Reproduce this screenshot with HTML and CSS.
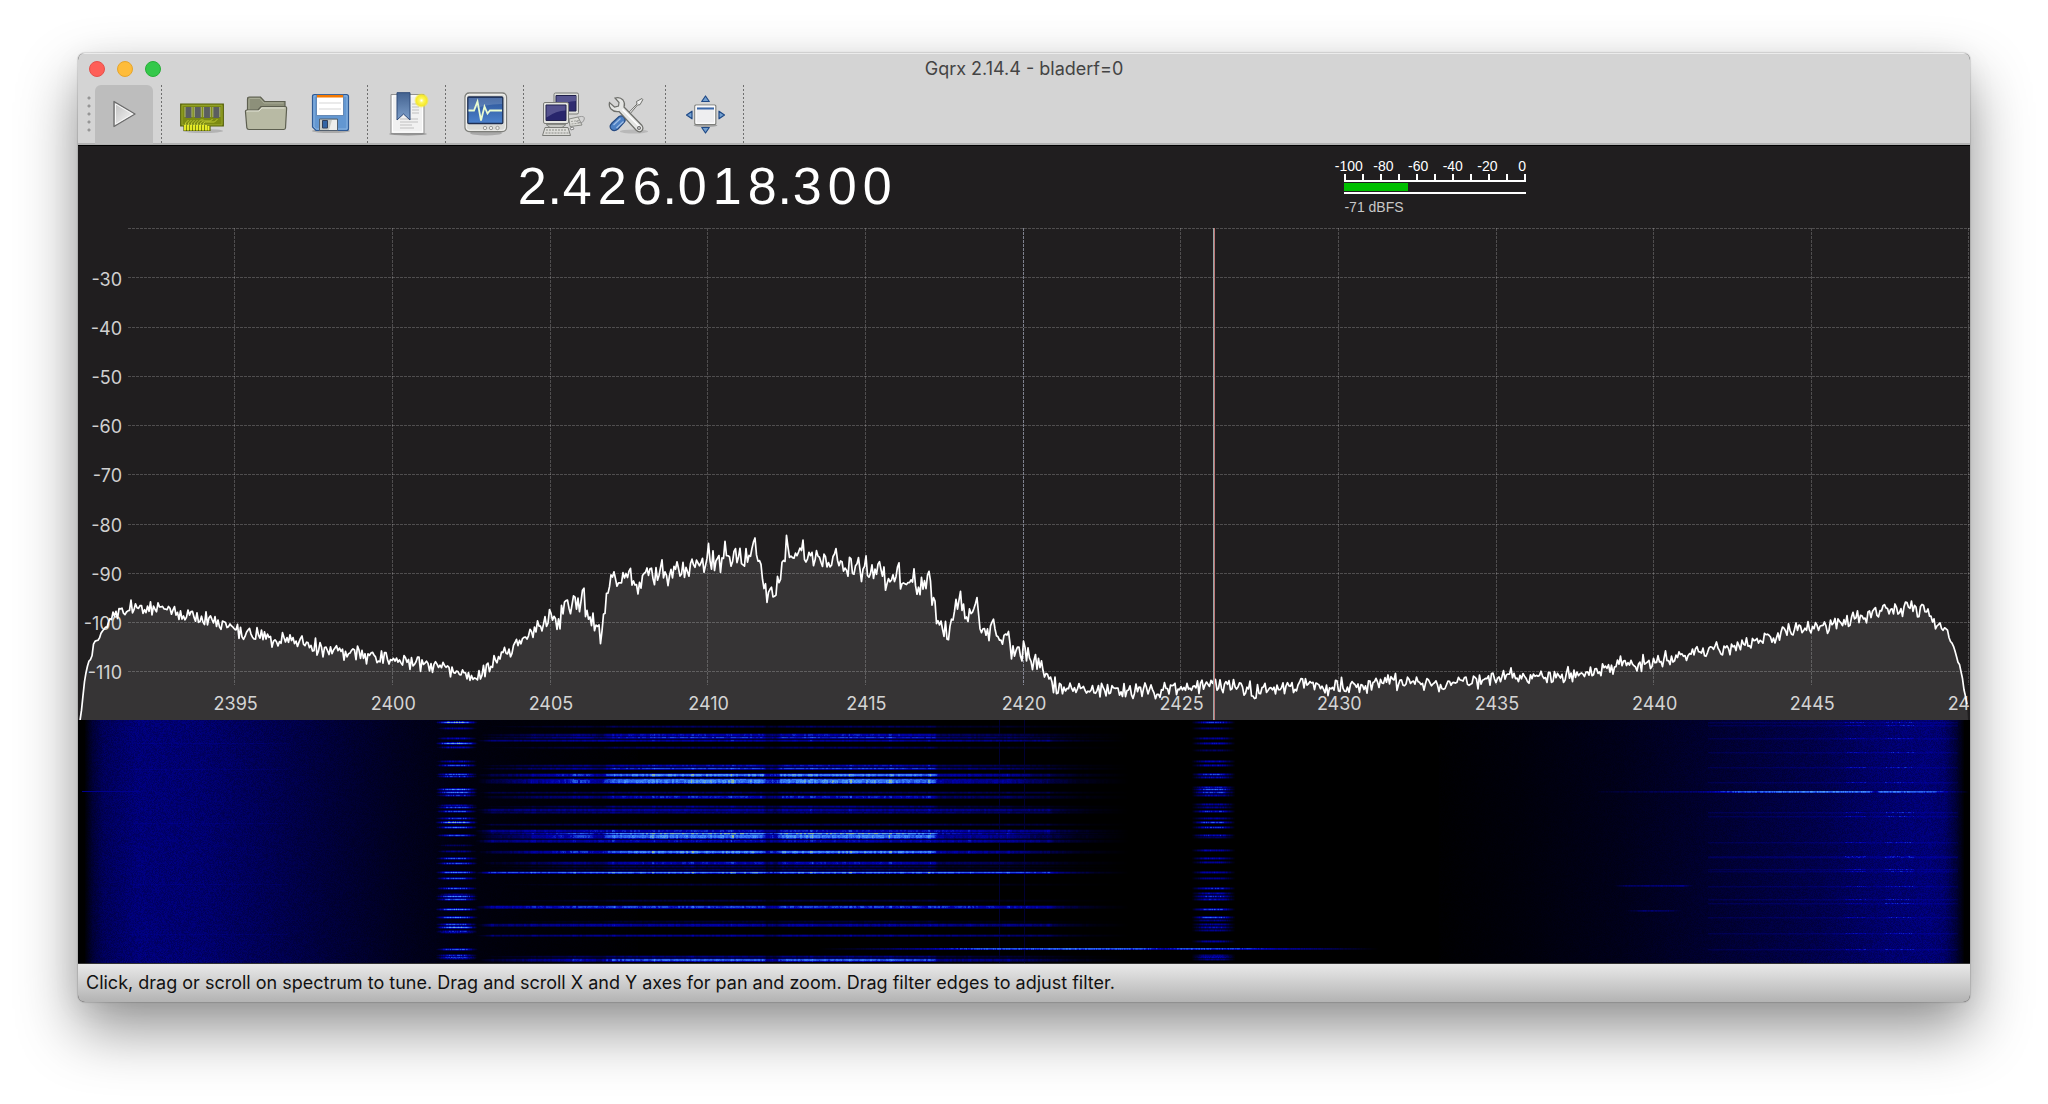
FILE: index.html
```html
<!DOCTYPE html>
<html lang="en">
<head>
<meta charset="utf-8">
<title>Gqrx 2.14.4 - bladerf=0</title>
<link rel="stylesheet" href="styles.css">
</head>
<body>
<main class="window">
  <header class="chrome">
    <div class="titlebar">
      <div class="lights">
        <button class="light light-close" aria-label="Close"></button>
        <button class="light light-min" aria-label="Minimize"></button>
        <button class="light light-zoom" aria-label="Zoom"></button>
      </div>
      <h1 class="title">Gqrx 2.14.4 - bladerf=0</h1>
    </div>
    <div class="toolbar" role="toolbar" aria-label="Main">
      <span class="handle"></span>
      <button class="tool tool-active" aria-label="Start DSP">
        <svg class="icon" viewBox="0 0 44 44"><defs><linearGradient id="g1" x2="1" y2="1"><stop stop-color="#bdbdbd"/><stop offset="1" stop-color="#fdfdfd"/></linearGradient></defs><path d="M12 9.500L33 22 12 34.500z" fill="url(#g1)" stroke="#6b6b6b" stroke-width="1.300" stroke-linejoin="round"/><path d="M13.500 12L30.500 22 13.500 32z" fill="none" stroke="#f6f6f6"/></svg>
      </button>
      <span class="sep"></span>
      <button class="tool" aria-label="Configure I/O devices">
        <svg class="icon" viewBox="0 0 44 44"><ellipse cx="23" cy="39" rx="20" ry="2" fill="#000" opacity=".16"/><path d="M.700 12h42.600v22H30v4.500H4V34H.700z" fill="#7c8a12" stroke="#55600a" stroke-width="1.200"/><path d="M2 13.300h40v19.500H2z" fill="none" stroke="#97a52c"/><g stroke="#bcc832" fill="none"><path d="M5.500 34v-3l3-3M8.500 34v-3l3-3M11.500 34v-3l3-3M14.500 34v-3l3-3M17.500 34v-3l3-3h3M20.500 34v-3l3-2h7l2-2M23.500 34v-3l2-1h9l3-3"/></g><path d="M5 33v5.500M8 33v5.500M11 33v5.500M14 33v5.500M17 33v5.500M20 33v5.500M23 33v5.500M26 33v5.500M28.500 34v4.500" stroke="#f0f32a" stroke-width="1.800"/><g fill="#5b5e60"><path d="M5.500 15h6v11h-6zM14.800 15h6v11h-6zM24 15h6v11h-6zM33.300 15h6v11h-6z"/></g><g stroke="#c9ccc0" stroke-width="1.200" stroke-dasharray="1 1"><path d="M5 15.500v10M12 15.500v10M14.300 15.500v10M21.300 15.500v10M23.500 15.500v10M30.500 15.500v10M32.800 15.500v10M39.800 15.500v10"/></g></svg>
      </button>
      <button class="tool" aria-label="Load settings">
        <svg class="icon" viewBox="0 0 44 44"><path d="M3.500 36V7q0-2 2-2h11l4 4.500h20.500V30z" fill="#8d907a" stroke="#5d5f50" stroke-width="1.200"/><path d="M5 18V7.500q0-1 1-1h10l4 4.500h19.500" fill="none" stroke="#a9ac97"/><path d="M1.500 20q-.3-2 1.500-2h11l3-3.500h24q1.800 0 1.600 2L41.500 36q-.2 1.500-2 1.500H5q-2 0-2.200-2z" fill="#b8baa4" stroke="#5d5f50" stroke-width="1.200"/><path d="M3 20l.300-1H15l3-3h22.500" fill="none" stroke="#e0e1d4"/></svg>
      </button>
      <button class="tool" aria-label="Save settings">
        <svg class="icon" viewBox="0 0 44 44"><ellipse cx="23" cy="39" rx="19" ry="2" fill="#000" opacity=".2"/><path d="M6.500 2.500h32q2 0 2 2v32q0 2-2 2H8l-3.500-3.500V4.500q0-2 2-2z" fill="#6397d1" stroke="#2f5a94" stroke-width="1.200"/><path d="M6 35V4h33v33H8.500z" fill="none" stroke="#8cb4e0"/><path d="M8.500 3h27v20.500h-27z" fill="#fff" stroke="#5379a8" stroke-width=".8"/><path d="M9 3h26v2.500H9z" fill="#f57900"/><path d="M11 11h22M11 17h22" stroke="#d5d5d5"/><path d="M11.500 27h18v11.500h-18z" fill="#c9cbc6" stroke="#53606e"/><path d="M24 28h5v10h-8z" fill="#eeeeec"/><path d="M14.500 28.500h5V36h-5z" fill="#3465a4" stroke="#33405a"/></svg>
      </button>
      <span class="sep"></span>
      <button class="tool" aria-label="Add bookmark">
        <svg class="icon" viewBox="0 0 44 44"><defs><radialGradient id="g2"><stop stop-color="#fff"/><stop offset=".3" stop-color="#fdf65a"/><stop offset=".7" stop-color="#f6e92a"/><stop offset="1" stop-color="#f6e92a" stop-opacity="0"/></radialGradient><linearGradient id="g3" x2="0" y2="1"><stop stop-color="#436290"/><stop offset="1" stop-color="#7ea0cb"/></linearGradient></defs><ellipse cx="22" cy="42" rx="19" ry="1.500" fill="#000" opacity=".3"/><path d="M5 2.500h33v39H5z" fill="#f1f1f1" stroke="#919191"/><path d="M6.500 4h30v36h-30z" fill="none" stroke="#fff"/><path d="M14 27h18M14 30h18M14 33h12M14 36h14M26 12h7M26 15h7M26 18h7M26 21h7" stroke="#bfbfbf" stroke-width="1.200"/><path d="M11 .700h13V28l-6.500-6L11 28z" fill="url(#g3)" stroke="#2f4a78"/><circle cx="35.500" cy="8.500" r="7.500" fill="url(#g2)"/></svg>
      </button>
      <span class="sep"></span>
      <button class="tool" aria-label="Display settings">
        <svg class="icon" viewBox="0 0 44 44"><defs><linearGradient id="g4" x2="0" y2="1"><stop stop-color="#2b5294"/><stop offset="1" stop-color="#4b82cd"/></linearGradient></defs><ellipse cx="22" cy="41" rx="16" ry="2.500" fill="#000" opacity=".2"/><rect x="1" y="1" width="41.500" height="38.500" rx="4" fill="#dadbd7" stroke="#7d7e7a" stroke-width="1.300"/><rect x="2.300" y="2.300" width="39" height="36" rx="3" fill="none" stroke="#f5f5f3"/><rect x="3.800" y="5" width="35" height="26.500" rx="1" fill="url(#g4)" stroke="#1e2e50" stroke-width="1.300"/><path d="M4.500 6h33.500v6Q20 12 4.500 19z" fill="#fff" opacity=".17"/><path d="M4.500 18.500h5.500l3.500-9 3.500 19 3.500-14 3 7 2.500-3h12" fill="none" stroke="#e9fbd0" stroke-width="1.800"/><g fill="#eeeeec" stroke="#9a9b97"><circle cx="21" cy="36" r="1.700"/><circle cx="27" cy="36" r="1.700"/><circle cx="33.500" cy="36" r="1.700"/></g></svg>
      </button>
      <span class="sep"></span>
      <button class="tool" aria-label="Remote control">
        <svg class="icon" viewBox="0 0 44 44"><path d="M27 27l9-2 4 8-12 1.500z" fill="#dcdcd8" stroke="#888a85"/><path d="M29 29.500l8-1M29.500 32l9-1" stroke="#a0a19c" stroke-dasharray="2 1"/><path d="M36 25q8-2 6 3t-8 1" fill="none" stroke="#999"/><rect x="12" y="1" width="24.500" height="21" rx="1.500" fill="#dfe0dc" stroke="#7b7c78"/><path d="M14 3.500h20V19H14z" fill="#2f2c70" stroke="#20204a"/><path d="M14.500 4H34v5q-10 0-19.500 6z" fill="#8a88b8" opacity=".45"/><path d="M4 32.500h20l-4 3H8z" fill="#c6c7c3" stroke="#888a85"/><rect x="1.500" y="10.500" width="25" height="21" rx="1.500" fill="#e4e5e1" stroke="#7b7c78"/><path d="M4 13h20v15.500H4z" fill="#28256c" stroke="#20204a"/><path d="M4.500 13.500h19v5q-9 0-19 7z" fill="#8a88b8" opacity=".45"/><path d="M3 35.500h23l2.500 8H.500z" fill="#dcdcd8" stroke="#7b7c78"/><path d="M4 38h21M3.500 41h23" stroke="#a5a6a1" stroke-width="1.500" stroke-dasharray="2 1"/><path d="M28 36l3-1 1 2-3 1z" fill="#eee" stroke="#888"/></svg>
      </button>
      <button class="tool" aria-label="Settings">
        <svg class="icon" viewBox="0 0 44 44"><ellipse cx="28" cy="39.500" rx="14" ry="2" fill="#000" opacity=".13"/><path d="M16 27.500L31 12l-.5-2.500 5.500-3 .8 1.200-2.800 5-2.500.3L18 29z" fill="#eee" stroke="#6f706c"/><path d="M6 31l7-6.500q3-1.500 5 .8t.5 4.700L12 37q-3.500 3-6.500.5T6 31z" fill="#4d80c3" stroke="#264a82" stroke-width="1.200"/><path d="M7.500 33l7-6.500M10.500 36l7-6.500" stroke="#9dbde6" stroke-width="1.300"/><path d="M9 6q5-1.500 8 2 2.500 3.500 1 7L36 33.500q2 3-.3 5.300T30 38L13 19.500q-5 .8-8-2.500-2.500-3-1.500-6.500l5 4.500 4-1 .5-3.500z" fill="#e4e5e3" stroke="#6f706c" stroke-width="1.200"/><path d="M16.500 17.500L34 35" stroke="#fff" stroke-width="1.500"/><circle cx="33" cy="36" r="1.600" fill="#bbb" stroke="#777"/></svg>
      </button>
      <span class="sep"></span>
      <button class="tool" aria-label="Full screen">
        <svg class="icon" viewBox="0 0 44 44"><ellipse cx="21.500" cy="33.500" rx="12" ry="1.500" fill="#000" opacity=".25"/><rect x="10.800" y="13" width="21" height="19.500" rx="1" fill="#eeeef0" stroke="#7d7e7a" stroke-width="1.200"/><path d="M12 14.200h18.600v17H12z" fill="none" stroke="#fff"/><path d="M13 15.500h17v2H13z" fill="#3a67a8"/><g fill="#729fcf" stroke="#204a87" stroke-width="1.200" stroke-linejoin="round"><path d="M21.500 4l3.800 5.500h-7.600zM21.500 41l3.800-5.500h-7.600zM2.500 23L8 19.200v7.600zM40.500 23L35 19.200v7.600z"/></g></svg>
      </button>
      <span class="sep"></span>
    </div>
  </header>

  <section class="readout">
    <output class="frequency" aria-label="Frequency"><span class="digit">2</span><span class="dot">.</span><span class="digit">4</span><span class="digit">2</span><span class="digit">6</span><span class="dot">.</span><span class="digit">0</span><span class="digit">1</span><span class="digit">8</span><span class="dot">.</span><span class="digit">3</span><span class="digit">0</span><span class="digit">0</span></output>
    <div class="smeter">
      <div class="smeter-labels"><span>-100</span><span>-80</span><span>-60</span><span>-40</span><span>-20</span><span>0</span></div>
      <div class="smeter-gauge">
        <div class="smeter-ticks"><i></i><i></i><i></i><i></i><i></i><i></i><i></i><i></i><i></i><i></i></div>
        <div class="smeter-track"><div class="smeter-fill"></div></div>
        <div class="smeter-value">-71 dBFS</div>
      </div>
    </div>
  </section>

  <section class="spectrum">
    <div class="y-axis"><span>-30</span><span>-40</span><span>-50</span><span>-60</span><span>-70</span><span>-80</span><span>-90</span><span>-100</span><span>-110</span></div>
    <div class="x-axis"><span>2395</span><span>2400</span><span>2405</span><span>2410</span><span>2415</span><span>2420</span><span>2425</span><span>2430</span><span>2435</span><span>2440</span><span>2445</span><span>2450</span></div>
    <div class="layer"><canvas id="plot"></canvas></div>
  </section>

  <section class="waterfall"><canvas id="waterfall"></canvas></section>

  <footer class="status">Click, drag or scroll on spectrum to tune. Drag and scroll X and Y axes for pan and zoom. Drag filter edges to adjust filter.</footer>
</main>
<script src="app.js"></script>
</body>
</html>
```
FILE: styles.css
```css
* { box-sizing: border-box; }

body {
  margin: 0;
  height: 100vh;
  min-height: 640px;
  padding: 53px 78px 102px;
  display: flex;
  background: #fff;
  font-family: Inter, "Noto Sans", sans-serif;
  overflow: hidden;
}

.window {
  flex: 1;
  min-width: 0;
  display: flex;
  flex-direction: column;
  border-radius: 7px;
  overflow: hidden;
  background: #201e1f;
  box-shadow: 0 0 1px 1px rgba(0, 0, 0, 0.12), 0 28px 60px rgba(0, 0, 0, 0.42), 0 6px 30px rgba(0, 0, 0, 0.06);
}

.chrome {
  background: #d4d4d4;
  border-top: 1px solid #ececec;
  border-bottom: 1px solid #000;
  box-shadow: inset 0 -2px 0 #b2b2b2;
}

.titlebar {
  display: grid;
  grid-template-columns: 1fr auto 1fr;
  align-items: center;
  height: 29px;
  padding: 0 11px;
}

.lights { display: flex; gap: 12px; }

.light {
  width: 16px;
  height: 16px;
  padding: 0;
  border: 1px solid;
  border-radius: 50%;
}
.light-close { background: #fe5f58; border-color: #e5504a; }
.light-min { background: #febc3a; border-color: #e6a52c; }
.light-zoom { background: #34c84a; border-color: #27ae37; }

.title {
  margin: 0;
  font-size: 18px;
  font-weight: 400;
  line-height: 29px;
  color: #444;
}

.toolbar {
  display: flex;
  align-items: stretch;
  gap: 6px;
  height: 62px;
  padding: 2px 0 1px 9px;
}

.handle {
  width: 4px;
  margin: 9px 0;
  margin-right: -2px;
  background: radial-gradient(circle at 2px 4px, #969696 1px, transparent 2px) 0 0 / 4px 8px;
}

.tool {
  width: 58px;
  padding: 0 0 2px;
  border: 0;
  display: grid;
  place-items: center;
  background: none;
}
.tool-active { background: #bdbdbd; border-radius: 6px 6px 0 0; }

.icon { width: 44px; height: 44px; }

.sep {
  width: 8px;
  background: repeating-linear-gradient(#6e6e6e 0 2px, transparent 2px 4px) 2px 0 / 1px 100% no-repeat;
}

.readout {
  display: grid;
  grid-template-columns: 53fr 27fr;
  height: 82px;
  font-family: "Liberation Sans", Arial, sans-serif;
}

.frequency {
  display: flex;
  justify-content: center;
  color: #fff;
  font-size: 52px;
  line-height: 80px;
}
.digit { width: 35px; text-align: center; }
.dot { width: 10px; display: flex; justify-content: center; }

.smeter {
  width: 208px;
  padding-top: 12px;
  color: #fff;
  font-size: 14px;
  line-height: 16px;
}
.smeter-labels { display: grid; grid-template-columns: repeat(6, 1fr); text-align: center; }
.smeter-gauge { margin: 0 13px; }
.smeter-ticks {
  display: flex;
  height: 8px;
  border-right: 2px solid #fff;
  border-bottom: 2px solid #fff;
}
.smeter-ticks i { flex: 1; border-left: 2px solid #fff; }
.smeter-track { height: 12px; padding: 1px 0; border-bottom: 2px solid #fff; }
.smeter-fill { width: 35%; height: 8px; background: #00c000; }
.smeter-value { margin-top: 5px; color: #c8c8c8; }

.spectrum {
  flex: 492 0 0;
  min-height: 0;
  display: grid;
  grid-template: 100% / 100%;
  overflow: hidden;
  color: #d0d0d0;
  font-size: 18px;
  line-height: 20px;
}
.spectrum > * { grid-area: 1 / 1; }

.y-axis {
  display: grid;
  grid-template-rows: repeat(9, 1fr);
  align-items: center;
  width: 44px;
  height: 90%;
  margin-top: 27px;
  text-align: right;
}
.y-axis span { justify-self: end; }

.x-axis {
  align-self: end;
  display: grid;
  grid-template-columns: repeat(12, 1fr);
  width: 100%;
  margin-left: calc(100% / 24);
  padding-bottom: 6px;
  text-align: center;
}

.layer { min-width: 0; min-height: 0; }

.waterfall { flex: 243 0 0; min-height: 0; background: #000; }

canvas { display: block; width: 100%; height: 100%; }

.status {
  height: 39px;
  padding-left: 8px;
  border-top: 1px solid #333;
  background: linear-gradient(#e9e9e9, #b3b3b3);
  color: #111;
  font-size: 18px;
  line-height: 38px;
  white-space: nowrap;
}
```
FILE: app.js
```javascript
// Spectrum and waterfall rendering. Sample tables use a 1892 x 492 trace space
// and a 1892 x 243 waterfall space, scaled to whatever size the canvas has.
const W = 1892, PH = 492, WH = 243;

let seed = 7;
function rnd() {
  seed = (seed * 1664525 + 1013904223) >>> 0;
  return seed / 4294967296;
}

const ENVELOPE = [
  2,492, 7,452, 9,437, 14,427, 15,415, 19,413, 25,404, 32,392, 40,385, 54,379, 79,379, 105,388,
  132,390, 159,402, 182,409, 215,414, 265,424, 305,430, 332,437, 362,438, 390,447, 412,440,
  425,429, 442,415, 462,401, 482,389, 487,377, 499,375, 504,371, 512,384, 517,402, 523,409,
  526,385, 532,359, 535,353, 557,355, 582,345, 615,338, 639,331, 669,327, 678,324, 684,344,
  690,369, 695,373, 700,347, 707,326, 725,327, 749,333, 782,341, 815,349, 835,356, 850,358,
  857,375, 865,409, 870,405, 877,382, 884,378, 899,386, 904,401, 919,401, 935,422, 949,425,
  962,445, 972,452, 979,460, 1029,463, 1095,462, 1139,457, 1179,463, 1222,457, 1262,459,
  1319,454, 1362,456, 1395,453, 1429,449, 1462,447, 1482,447, 1512,444, 1545,437, 1575,434,
  1595,429, 1629,423, 1662,417, 1695,409, 1722,400, 1745,399, 1762,394, 1779,389, 1795,384,
  1825,380, 1845,382, 1859,397, 1869,402, 1877,422, 1884,447, 1889,479, 1890,492
];

// Linear lookup in a flat list of x, value pairs.
function lookup(list, x) {
  if (x <= list[0]) return list[1];
  for (let i = 2; i < list.length; i += 2) {
    if (x <= list[i]) {
      const t = (x - list[i - 2]) / (list[i] - list[i - 2]);
      return list[i - 1] + t * (list[i + 1] - list[i - 1]);
    }
  }
  return list[list.length - 1];
}

function fit(canvas) {
  canvas.width = canvas.clientWidth;
  canvas.height = canvas.clientHeight;
  return canvas.getContext('2d');
}

function drawPlot() {
  seed = 7;
  const c = document.getElementById('plot');
  const g = fit(c);
  const sx = c.width / W, sy = c.height / PH;

  const pts = [];
  for (let x = 2; x <= 1890; x += 1.5) {
    let y = lookup(ENVELOPE, x);
    const steep = x < 35 || x > 1865;
    const signal = x > 470 && x < 965;
    let n = (rnd() + rnd() - 1) * (steep ? 4 : signal ? 14 : 10);
    if (!steep && rnd() < 0.05) n -= 8 * rnd();
    if (signal) {
      const step = 15.76;
      const d = Math.abs(((x % step) + step + 8) % step - 8);
      n -= Math.max(0, 12 - d * 4) - 2;
    }
    pts.push([x * sx, (y + n) * sy]);
  }

  g.beginPath();
  pts.forEach(p => g.lineTo(p[0], p[1]));
  g.lineTo(1890 * sx, c.height);
  g.lineTo(2 * sx, c.height);
  g.fillStyle = 'rgba(255,255,255,0.1)';
  g.fill();

  g.lineWidth = 1;
  g.setLineDash([3, 1]);
  g.strokeStyle = 'rgba(255,255,255,0.21)';
  for (let i = 0; i < 10; i++) {
    const y = Math.round(i * 49.25 * sy) + 0.5;
    g.beginPath(); g.moveTo(50, y); g.lineTo(c.width, y); g.stroke();
  }
  for (let i = 1; i <= 12; i++) {
    const x = Math.min(c.width - 2, Math.floor(i * c.width / 12 - 1)) + 0.5;
    g.strokeStyle = i === 6 ? 'rgba(190,195,215,0.6)' : 'rgba(255,255,255,0.21)';
    g.beginPath(); g.moveTo(x, 0); g.lineTo(x, c.height - 35); g.stroke();
  }
  g.setLineDash([]);

  g.strokeStyle = '#fff';
  g.lineWidth = 1.7;
  g.lineJoin = 'round';
  g.beginPath();
  pts.forEach(p => g.lineTo(p[0], p[1]));
  g.stroke();

  const tuned = Math.round(1135 * sx);
  g.fillStyle = '#93a8a8';
  g.fillRect(tuned, 0, 1, c.height);
  g.fillStyle = '#c07676';
  g.fillRect(tuned + 1, 0, 1, c.height);
}

const FLOOR = [
  0,0, 6,0, 14,.12, 25,.2, 60,.27, 120,.25, 180,.2, 250,.13, 320,.07, 380,.03, 450,.015, 560,0,
  1360,0, 1440,.02, 1540,.055, 1640,.11, 1740,.17, 1800,.24, 1850,.27, 1866,.24, 1878,.12, 1886,0, 1892,0
];

// Row, strength, number of rows, and whether the burst has full-width shoulders.
const WIFI = [
  [6,.2,1,0],[14,.45,2,0],[17,.55,1,0],[20,.4,1,1],[27,.22,1,0],[45,.45,1,0],[48,.6,1,0],
  [54,.86,2,0],[59,.75,1,0],[60,.86,3,0],[72,.22,1,1],[76,.5,2,0],[86,.3,1,0],[89,.38,2,1],
  [92,.28,1,1],[104,.2,1,1],[110,.5,2,1],[113,1,1,0],[115,.84,3,0],[120,.45,2,1],[131,.86,2,0],
  [142,.45,2,0],[146,.2,1,0],[149,.2,1,0],[152,.88,1,1],[164,.12,1,0],[180,.14,1,0],
  [186,.6,2,1],[201,.12,1,0],[204,.38,2,1],[215,.34,1,1],[236,.3,1,0],[239,.7,2,0]
];
const LEFT = [
  2,.95,8,.35,18,.4,23,.9,27,.4,41,.4,45,.6,54,.6,56,.55,69,.75,72,.75,75,.5,85,.4,87,.6,91,.6,
  98,.55,102,.9,107,.7,115,.6,125,.2,131,.3,138,.6,143,.6,152,.75,158,.6,168,.6,174,.3,176,.75,
  179,.65,189,.8,197,.75,204,.6,207,.85,211,.5,212,.4,229,.6,235,.5,237,.55,238,.4
];
const RIGHT = [
  2,.5,8,.25,18,.35,23,.4,30,.2,41,.4,45,.4,54,.55,57,.4,67,.45,69,.65,72,.6,75,.4,84,.35,87,.3,
  91,.5,98,.35,102,.6,107,.5,115,.45,117,.2,130,.4,138,.4,142,.35,152,.4,158,.3,168,.5,173,.4,
  176,.5,179,.45,189,.6,197,.65,200,.3,204,.35,207,.4,210,.3,221,.35,235,.3,236,.35,237,.4,239,.3
];
const FAR = [2,5,18,32,47,62,92,96,122,136,137,149,151,166,179,183,197,213,229];
const SHOULDERS = [395,0, 412,.15, 440,.3, 475,.5, 500,.66, 510,.64, 516,.48, 524,.46, 530,.75, 545,.9, 600,1, 684,1, 688,.55, 698,.55, 704,1, 790,1, 856,.85, 860,.45, 930,.4, 960,.25, 1000,.08, 1050,0];
const WIFI_WIDE = [395,0, 405,.3, 413,.65, 500,.85, 530,.95, 684,1, 688,.65, 698,.65, 704,1, 856,.9, 970,.65, 976,.4, 1010,.12, 1050,0];

function color(t) {
  const stops = [
    [0, 0, 0, 0], [.3, 0, 0, 128], [.45, 0, 0, 175], [.6, 25, 70, 215],
    [.8, 50, 115, 245], [.95, 75, 155, 250], [1.1, 150, 190, 150]
  ];
  for (let i = 1; i < stops.length; i++) {
    if (t <= stops[i][0]) {
      const a = stops[i - 1], b = stops[i];
      const k = (t - a[0]) / (b[0] - a[0]);
      return [1, 2, 3].map(n => a[n] + k * (b[n] - a[n]));
    }
  }
  return stops[stops.length - 1].slice(1);
}

function drawWaterfall() {
  seed = 99;
  const level = new Float32Array(W * WH);
  for (let x = 0; x < W; x++) {
    const base = lookup(FLOOR, x);
    for (let y = 0; y < WH; y++) level[y * W + x] = base * (0.82 + 0.36 * rnd()) + (base > 0 ? 0.008 * rnd() : 0);
  }
  const put = (x, y, v) => {
    if (y < 0 || y >= WH || x < 0 || x >= W) return;
    const i = y * W + x;
    if (v > level[i]) level[i] = v;
  };

  for (const [row, s, n, wide] of WIFI) {
    let jitter = 1;
    for (let x = 395; x < 1080; x++) {
      if (x % 2 === 0) jitter = 0.82 + 0.34 * rnd();
      const hot = Math.abs(((x - 455) % 39.5)) < 3 ? 1.2 : 1;
      const v = s * jitter * hot * lookup(wide ? WIFI_WIDE : SHOULDERS, x);
      for (let r = 0; r < n; r++) put(x, row + r, v * (r ? 0.88 + 0.2 * rnd() : 1));
      put(x, row + n, v * 0.6);
      put(x, row - 1, v * 0.3);
    }
  }

  const band = (list, cx, half) => {
    for (let i = 0; i < list.length; i += 2) {
      for (let dx = -half - 8; dx <= half + 8; dx++) {
        const d = Math.abs(dx) / half;
        const shape = d < 0.5 ? 1 : Math.max(0, 1 - (d - 0.5) * 1.15);
        const v = list[i + 1] * shape * (0.8 + 0.45 * rnd());
        put(cx + dx, list[i], v);
        put(cx + dx, list[i] - 1, v * 0.5);
        put(cx + dx, list[i] + 1, v * 0.4);
      }
    }
  };
  band(LEFT, 378, 16);
  band(RIGHT, 1135, 16);

  // Long bursts: start, end, row, strength profile.
  const burst = (x0, x1, row, s, profile) => {
    for (let x = x0; x < x1; x++) {
      const v = s * (0.8 + 0.35 * rnd()) * lookup(profile, x);
      put(x, row, v);
      put(x, row + 1, v * 0.8);
    }
  };
  burst(740, 1300, 228, .75, [740,0, 800,.2, 850,.5, 900,.85, 1000,1, 1075,.8, 1085,.5, 1105,.9, 1160,.75, 1200,.5, 1300,0]);
  burst(1520, 1890, 71, .9, [1520,.1, 1620,.3, 1660,.75, 1740,.95, 1790,.9, 1797,.4, 1802,.9, 1850,.8, 1880,.2, 1890,0]);
  burst(1530, 1620, 165, .3, [1530,0, 1550,.8, 1605,1, 1620,0]);
  burst(1540, 1612, 190, .25, [1540,0, 1565,1, 1590,.9, 1612,0]);

  for (const row of FAR) {
    for (let x = 1630; x < 1880; x++) {
      const i = row * W + x;
      level[i] += 0.07;
      level[i + W] += 0.03;
      if ((x > 1766 && x < 1788) || (x > 1806 && x < 1836)) level[i] += 0.22 * rnd();
    }
  }
  for (const row of [23, 49, 103, 164, 214]) {
    for (let x = 52; x < 210; x++) level[row * W + x] += 0.035;
  }
  for (let x = 4; x < 62; x++) put(x, 71, .34);
  for (const x of [921, 946]) {
    for (let y = 0; y < WH; y++) put(x, y, .12);
  }

  const src = document.createElement('canvas');
  src.width = W;
  src.height = WH;
  const sg = src.getContext('2d');
  const img = sg.createImageData(W, WH);
  for (let i = 0; i < level.length; i++) {
    const [r, g, b] = color(level[i]);
    img.data[i * 4] = r;
    img.data[i * 4 + 1] = g;
    img.data[i * 4 + 2] = b;
    img.data[i * 4 + 3] = 255;
  }
  sg.putImageData(img, 0, 0);

  const c = document.getElementById('waterfall');
  fit(c).drawImage(src, 0, 0, c.width, c.height);
}

function draw() {
  drawPlot();
  drawWaterfall();
}
draw();
window.addEventListener('resize', draw);
```
